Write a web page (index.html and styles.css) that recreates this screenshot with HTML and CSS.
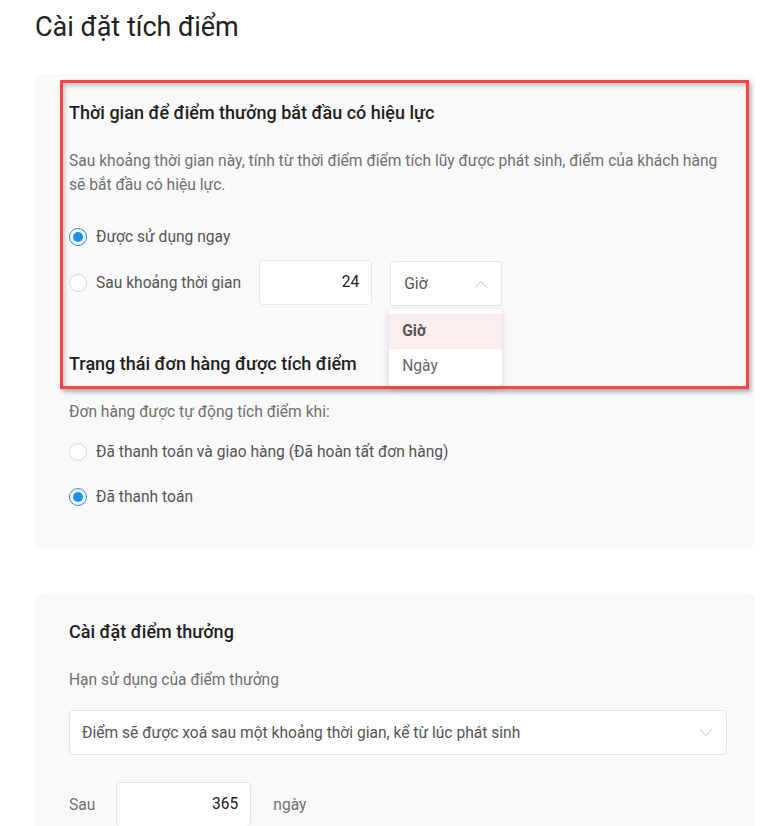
FILE: index.html
```html
<!DOCTYPE html>
<html lang="vi">
<head>
  <meta charset="UTF-8">
  <meta name="viewport" content="width=device-width, initial-scale=1.0">
  <title>Cài đặt tích điểm</title>
  <link rel="stylesheet" href="styles.css">
</head>
<body>
  <div class="page">
    <h1 class="page-title">Cài đặt tích điểm</h1>

    <div class="card card-first">
      <h2 class="section-title">Thời gian để điểm thưởng bắt đầu có hiệu lực</h2>
      <p class="hint">Sau khoảng thời gian này, tính từ thời điểm điểm tích lũy được phát sinh, điểm của khách hàng sẽ bắt đầu có hiệu lực.</p>

      <div class="radio-row first-radio">
        <span class="radio checked"></span>
        <span class="radio-label">Được sử dụng ngay</span>
      </div>
      <div class="radio-row time-row">
        <span class="radio"></span>
        <span class="radio-label">Sau khoảng thời gian</span>
        <div class="num-input small">24</div>
        <div class="select unit-select">
          <span>Giờ</span>
          <svg width="12" height="8" viewBox="0 0 12 8"><path d="M0.5 7.5 L6 1.5 L11.5 7.5" fill="none" stroke="#bfbfbf" stroke-width="1"/></svg>
          <div class="dropdown">
            <div class="option active">Giờ</div>
            <div class="option">Ngày</div>
          </div>
        </div>
      </div>

      <h2 class="section-title second-title">Trạng thái đơn hàng được tích điểm</h2>
      <p class="hint">Đơn hàng được tự động tích điểm khi:</p>

      <div class="radio-row group-radio">
        <span class="radio"></span>
        <span class="radio-label">Đã thanh toán và giao hàng (Đã hoàn tất đơn hàng)</span>
      </div>
      <div class="radio-row group-radio next">
        <span class="radio checked"></span>
        <span class="radio-label">Đã thanh toán</span>
      </div>

      <!-- annotation frame -->
      <div class="highlight"></div>
    </div>

    <div class="card card-second">
      <h2 class="section-title">Cài đặt điểm thưởng</h2>
      <p class="hint">Hạn sử dụng của điểm thưởng</p>

      <div class="select wide-select">
        <span>Điểm sẽ được xoá sau một khoảng thời gian, kể từ lúc phát sinh</span>
        <svg width="12" height="7" viewBox="0 0 12 7"><path d="M0.5 0.5 L6 6.5 L11.5 0.5" fill="none" stroke="#bfbfbf" stroke-width="1"/></svg>
      </div>

      <div class="after-row">
        <span class="hint-inline">Sau</span>
        <div class="num-input big">365</div>
        <span class="hint-inline">ngày</span>
      </div>
    </div>
  </div>
</body>
</html>
```

FILE: styles.css
```css
body {
  margin: 0;
  font-family: Roboto, "Noto Sans", Arial, sans-serif;
  background: #fff;
  color: #212121;
}
.page {
  padding: 9px 0 0 35px;
  width: 720px;
}
.page-title {
  margin: 0;
  font-size: 27px;
  line-height: 36px;
  font-weight: 400;
  color: #212121;
}
.card {
  position: relative;
  background: #f9f9f9;
  border-radius: 8px;
  padding: 24px 28px 40px 34px;
}
.card-first {
  margin-top: 29px;
}
.card-second {
  margin-top: 44px;
}
.section-title {
  margin: 0;
  font-size: 18px;
  line-height: 30px;
  font-weight: 500;
  color: #1f1f1f;
}
.second-title {
  margin-top: 43px;
}
.hint {
  margin: 21px 0 0;
  font-size: 15.6px;
  line-height: 24px;
  color: #707070;
}
.radio-row {
  display: flex;
  align-items: center;
  font-size: 15.6px;
  line-height: 24px;
  color: #555;
}
.first-radio {
  margin-top: 28px;
}
.time-row {
  margin-top: 10px;
}
.group-radio {
  margin-top: 16px;
}
.group-radio.next {
  margin-top: 21px;
}
.radio {
  box-sizing: border-box;
  width: 18px;
  height: 18px;
  border: 1px solid #d9d9d9;
  border-radius: 50%;
  background: #fff;
  margin-right: 9px;
  position: relative;
}
.radio.checked {
  border-color: #1890ff;
}
.radio.checked::after {
  content: "";
  position: absolute;
  left: 3px;
  top: 3px;
  width: 10px;
  height: 10px;
  border-radius: 50%;
  background: #1890ff;
}
.num-input {
  box-sizing: border-box;
  height: 45px;
  background: #fff;
  border: 1px solid #e3e6eb;
  border-radius: 4px;
  text-align: right;
  padding: 0 12px;
  line-height: 43px;
  font-size: 15.6px;
  color: #212121;
}
.num-input.small {
  width: 113px;
  margin-left: 18px;
}
.select {
  box-sizing: border-box;
  position: relative;
  display: flex;
  align-items: center;
  justify-content: space-between;
  background: #fff;
  border: 1px solid #e3e6eb;
  border-radius: 4px;
  font-size: 15.6px;
  color: #555;
}
.unit-select {
  width: 112px;
  height: 45px;
  margin-left: 18px;
  margin-top: 2px;
  padding: 0 14px 0 13px;
}
.dropdown {
  position: absolute;
  left: -2px;
  top: 47px;
  width: 113px;
  background: #fff;
  border-radius: 4px;
  box-shadow: 0 3px 8px rgba(0, 0, 0, 0.15);
  padding: 5px 0 2px;
  z-index: 2;
}
.option {
  height: 35px;
  line-height: 35px;
  padding-left: 13px;
  color: #666;
}
.option.active {
  background: #fdeeee;
  font-weight: 700;
  color: #555;
}
.highlight {
  position: absolute;
  left: 25px;
  top: 6px;
  width: 689px;
  height: 309px;
  box-sizing: border-box;
  border: 3px solid #fb4545;
  box-shadow: 2px 3px 4px rgba(0, 0, 0, 0.3), inset 2px 3px 4px rgba(0, 0, 0, 0.2);
  z-index: 3;
  pointer-events: none;
}
.wide-select {
  height: 45px;
  margin-top: 18px;
  padding: 0 14px 0 12px;
}
.after-row {
  display: flex;
  align-items: center;
  margin-top: 27px;
}
.hint-inline {
  font-size: 15.6px;
  color: #707070;
}
.num-input.big {
  width: 135px;
  margin: 0 22px 0 21px;
}
```
